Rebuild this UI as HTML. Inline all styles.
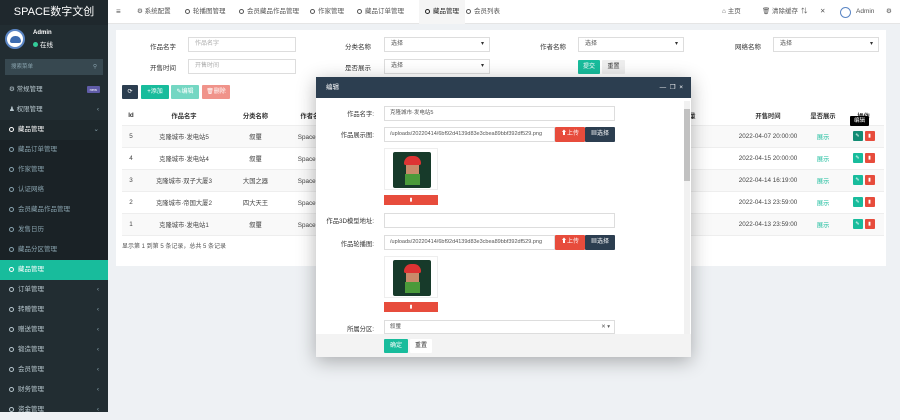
<!DOCTYPE html>
<html><head><meta charset="utf-8"><style>
*{margin:0;padding:0;box-sizing:border-box}
body{width:900px;height:412px;overflow:hidden;background:#eef1f4;font-family:"Liberation Sans","Noto Sans CJK SC",sans-serif;font-size:7px;color:#333;position:relative}
.a{position:absolute}
#side{left:0;top:0;width:108px;height:412px;background:#222d32}
#logo{left:0;top:0;width:108px;height:25px;background:#1f282d;color:#fff;font-size:11px;text-align:center;line-height:25px}
.si{position:absolute;left:0;width:108px;height:20px;line-height:20px;padding-left:9px;color:#b8c7ce;font-size:6.5px}
.si.sub{background:#1a2226;color:#8aa4af}
.si .c{display:inline-block;width:5px;height:5px;border:1.3px solid #b8c7ce;border-radius:50%;margin-right:4px;vertical-align:-0.5px}
.si .ar{position:absolute;right:9px;color:#8aa4af}
#top{left:108px;top:0;width:792px;height:24px;background:#fff;border-bottom:1px solid #e5e5e5}
.tn{position:absolute;top:0;line-height:24px;font-size:6.5px;color:#555}
.tn .c{display:inline-block;width:5px;height:5px;border:1.2px solid #555;border-radius:50%;margin-right:3px;vertical-align:-.5px}
#card{left:116px;top:30px;width:770px;height:236px;background:#fff}
.lb{position:absolute;font-size:6.5px;color:#333}
.in{position:absolute;height:15px;border:1px solid #ddd;background:#fff;font-size:6px;color:#aaa;line-height:13px;padding-left:6px}
.sel::after{content:"▾";position:absolute;right:5px;color:#333;font-size:6px}
.sel{color:#555}
.btn{position:absolute;height:14px;line-height:14px;color:#fff;font-size:6px;text-align:center;border-radius:1px}
table{position:absolute;border-collapse:collapse;font-size:6.3px}
td,th{height:22px;text-align:center;border-bottom:1px solid #eee;color:#444;font-weight:normal}
th{height:19px;font-weight:bold;color:#333}
tr.o td{background:#f9f9f9}
#modal{left:316px;top:77px;width:375px;height:280px;background:#fff;box-shadow:0 4px 18px rgba(0,0,0,.3)}
#mh{left:0;top:0;width:375px;height:21px;background:#2c3e50;color:#fff;line-height:21px;padding-left:10px;font-size:6.5px}
.ml{position:absolute;width:58px;text-align:right;font-size:6.3px;color:#333}
.mi{position:absolute;left:68px;height:15px;border:1px solid #ddd;font-size:5.5px;color:#555;line-height:13px;padding-left:5px;background:#fff}
.pic{position:absolute;left:68px;width:54px;height:42px;border:1px solid #eee;background:#fff}
.pic div{position:absolute;left:8px;top:3px;width:38px;height:36px;background:#173a2a;border-radius:2px;overflow:hidden}
.del{position:absolute;left:68px;width:54px;height:10px;background:#e74c3c;color:#fff;font-size:5px;text-align:center;line-height:10px}
.sh{display:inline-block;color:#18bc9c}
.ob{display:inline-block;width:10px;height:10px;border-radius:1px;vertical-align:middle;margin:0 1px;color:#fff;font-size:5px;line-height:10px}
</style></head><body>
<div id="side" class="a">
<div id="logo" class="a">SPACE数字文创</div>
<div class="a" style="left:5px;top:29px;width:20px;height:20px;border-radius:50%;background:#fff;border:2px solid #5b86c5"><div style="position:absolute;left:3px;top:5px;width:11px;height:7px;border-radius:5px 5px 2px 2px;background:#3d6cb0"></div></div>
<div class="a" style="left:33px;top:30px;color:#fff;font-size:6px;font-weight:bold">Admin</div>
<div class="a" style="left:33px;top:39px;color:#fff;font-size:6.5px"><span style="display:inline-block;width:5px;height:5px;border-radius:50%;background:#3c9;margin-right:2px"></span>在线</div>
<div class="a" style="left:5px;top:59px;width:98px;height:16px;background:#374850;color:#8aa4af;font-size:5.5px;line-height:16px;padding-left:6px">搜索菜单<span style="position:absolute;right:6px">⚲</span></div>
<div class="si" style="top:80px">⚙ 常规管理<span style="position:absolute;right:8px;top:6px;background:#605ca8;color:#fff;font-size:4px;line-height:7px;padding:0 3px;border-radius:1px">new</span></div>
<div class="si" style="top:100px">♟ 权限管理<span class="ar">‹</span></div>
<div class="si" style="top:120px;color:#fff;background:#1e282c"><span class="c" style="border-color:#fff"></span>藏品管理<span class="ar">⌄</span></div>
<div class="si sub" style="top:140px"><span class="c" style="border-color:#8aa4af"></span>藏品订单管理</div>
<div class="si sub" style="top:160px"><span class="c" style="border-color:#8aa4af"></span>作家管理</div>
<div class="si sub" style="top:180px"><span class="c" style="border-color:#8aa4af"></span>认证网络</div>
<div class="si sub" style="top:200px"><span class="c" style="border-color:#8aa4af"></span>会员藏品作品管理</div>
<div class="si sub" style="top:220px"><span class="c" style="border-color:#8aa4af"></span>发售日历</div>
<div class="si sub" style="top:240px"><span class="c" style="border-color:#8aa4af"></span>藏品分区管理</div>
<div class="si" style="top:260px;background:#18bc9c;color:#fff"><span class="c" style="border-color:#fff"></span>藏品管理</div>
<div class="si" style="top:280px"><span class="c"></span>订单管理<span class="ar">‹</span></div>
<div class="si" style="top:300px"><span class="c"></span>转赠管理<span class="ar">‹</span></div>
<div class="si" style="top:320px"><span class="c"></span>赠送管理<span class="ar">‹</span></div>
<div class="si" style="top:340px"><span class="c"></span>锻造管理<span class="ar">‹</span></div>
<div class="si" style="top:360px"><span class="c"></span>会员管理<span class="ar">‹</span></div>
<div class="si" style="top:380px"><span class="c"></span>财务管理<span class="ar">‹</span></div>
<div class="si" style="top:400px"><span class="c"></span>资金管理<span class="ar">‹</span></div>
</div>
<div id="top" class="a">
<div class="tn" style="left:8px;font-size:8px">≡</div>
<div class="tn" style="left:29px">⚙ 系统配置</div>
<div class="tn" style="left:77px"><span class="c"></span>轮播图管理</div>
<div class="tn" style="left:131px"><span class="c"></span>会员藏品作品管理</div>
<div class="tn" style="left:202px"><span class="c"></span>作家管理</div>
<div class="tn" style="left:249px"><span class="c"></span>藏品订单管理</div>
<div class="tn" style="left:311px;color:#222;background:#f5f5f5;padding:0 6px"><span class="c" style="border-color:#222"></span>藏品管理</div>
<div class="tn" style="left:358px"><span class="c"></span>会员列表</div>
<div class="tn" style="left:614px">⌂ 主页</div>
<div class="tn" style="left:654px">🗑 清除缓存</div>
<div class="tn" style="left:693px">⇅</div>
<div class="tn" style="left:712px">✕</div>
<div class="a" style="left:732px;top:7px;width:11px;height:11px;border-radius:50%;background:#fff;border:1.5px solid #5b86c5"></div>
<div class="tn" style="left:748px">Admin</div>
<div class="tn" style="left:778px">⚙</div>
</div>
<div id="card" class="a">
<div class="lb" style="left:34px;top:11px">作品名字</div><div class="in" style="left:72px;top:7px;width:108px">作品名字</div>
<div class="lb" style="left:34px;top:32px">开售时间</div><div class="in" style="left:72px;top:29px;width:108px">开售时间</div>
<div class="lb" style="left:229px;top:11px">分类名称</div><div class="in sel" style="left:268px;top:7px;width:106px">选择</div>
<div class="lb" style="left:229px;top:32px">是否展示</div><div class="in sel" style="left:268px;top:29px;width:106px">选择</div>
<div class="lb" style="left:424px;top:11px">作者名称</div><div class="in sel" style="left:462px;top:7px;width:106px">选择</div>
<div class="btn" style="left:462px;top:30px;width:22px;background:#18bc9c">提交</div>
<div class="btn" style="left:486px;top:30px;width:23px;background:#eee;color:#333">重置</div>
<div class="lb" style="left:619px;top:11px">网络名称</div><div class="in sel" style="left:657px;top:7px;width:106px">选择</div>
<div class="btn" style="left:6px;top:55px;width:16px;background:#2c3e50">⟳</div>
<div class="btn" style="left:25px;top:55px;width:28px;background:#18bc9c">+添加</div>
<div class="btn" style="left:55px;top:55px;width:28px;background:#74d7c3">✎编辑</div>
<div class="btn" style="left:86px;top:55px;width:28px;background:#f0938a">🗑删除</div>
<table style="left:6px;top:76px;width:762px">
<tr><th style="width:18px">Id</th><th style="width:88px">作品名字</th><th style="width:55px">分类名称</th><th style="width:60px">作者名称</th><th style="width:340px"></th><th style="width:50px;text-align:left">数量</th><th style="width:70px">开售时间</th><th style="width:40px">是否展示</th><th>操作</th></tr>
<tr class="o"><td>5</td><td>克隆城市·发电站5</td><td>叙璽</td><td>Space数字</td><td></td><td style="text-align:left">82</td><td>2022-04-07 20:00:00</td><td><span class="sh">展示</span></td><td><span class="ob" style="background:#128c74">✎</span><span class="ob" style="background:#e74c3c">▮</span></td></tr>
<tr><td>4</td><td>克隆城市·发电站4</td><td>叙璽</td><td>Space数字</td><td></td><td style="text-align:left">90</td><td>2022-04-15 20:00:00</td><td><span class="sh">展示</span></td><td><span class="ob" style="background:#18bc9c">✎</span><span class="ob" style="background:#e74c3c">▮</span></td></tr>
<tr class="o"><td>3</td><td>克隆城市·双子大厦3</td><td>大国之器</td><td>Space数字</td><td></td><td style="text-align:left">08</td><td>2022-04-14 16:19:00</td><td><span class="sh">展示</span></td><td><span class="ob" style="background:#18bc9c">✎</span><span class="ob" style="background:#e74c3c">▮</span></td></tr>
<tr><td>2</td><td>克隆城市·帝国大厦2</td><td>四大天王</td><td>Space数字</td><td></td><td style="text-align:left">11</td><td>2022-04-13 23:59:00</td><td><span class="sh">展示</span></td><td><span class="ob" style="background:#18bc9c">✎</span><span class="ob" style="background:#e74c3c">▮</span></td></tr>
<tr class="o"><td>1</td><td>克隆城市·发电站1</td><td>叙璽</td><td>Space数字</td><td></td><td style="text-align:left">35</td><td>2022-04-13 23:59:00</td><td><span class="sh">展示</span></td><td><span class="ob" style="background:#18bc9c">✎</span><span class="ob" style="background:#e74c3c">▮</span></td></tr>
</table>
<div class="lb" style="left:6px;top:211px;font-size:6px;color:#555">显示第 1 到第 5 条记录，总共 5 条记录</div>
</div>
<div class="a" style="left:850px;top:116px;width:19px;height:10px;background:#000;color:#fff;font-size:5.5px;text-align:center;line-height:10px;border-radius:1px">编辑</div>
<div id="modal" class="a">
<div id="mh" class="a">编辑<span style="position:absolute;right:8px">—&nbsp; ❐ &nbsp;×</span></div>
<div class="a" style="left:368px;top:24px;width:6px;height:234px;background:#f1f1f1"><div style="position:absolute;left:0;top:8px;width:6px;height:72px;background:#c1c1c1"></div></div>
<div class="ml" style="top:32px">作品名字:</div><div class="mi" style="top:29px;width:231px">克隆城市·发电站5</div>
<div class="ml" style="top:53px">作品展示图:</div><div class="mi" style="top:50px;width:171px">/uploads/20220414/6bf92d4139d83e3cbea89bbf392df529.png</div>
<div class="btn" style="left:239px;top:50px;width:30px;height:15px;background:#e74c3c">⬆上传</div>
<div class="btn" style="left:269px;top:50px;width:30px;height:15px;background:#2c3e50">▦选择</div>
<div class="pic" style="top:71px"><div><span style="position:absolute;left:11px;top:4px;width:17px;height:9px;background:#d33;border-radius:8px 8px 2px 2px"></span><span style="position:absolute;left:13px;top:13px;width:13px;height:9px;background:#c98a6a"></span><span style="position:absolute;left:12px;top:22px;width:15px;height:11px;background:#4a9a3a"></span></div></div>
<div class="del" style="top:118px">▮</div>
<div class="ml" style="top:139px;left:-6px;width:64px">作品3D模型地址:</div><div class="mi" style="top:136px;width:231px"></div>
<div class="ml" style="top:162px">作品轮播图:</div><div class="mi" style="top:158px;width:171px">/uploads/20220414/6bf92d4139d83e3cbea89bbf392df529.png</div>
<div class="btn" style="left:239px;top:158px;width:30px;height:15px;background:#e74c3c">⬆上传</div>
<div class="btn" style="left:269px;top:158px;width:30px;height:15px;background:#2c3e50">▦选择</div>
<div class="pic" style="top:179px"><div><span style="position:absolute;left:11px;top:4px;width:17px;height:9px;background:#d33;border-radius:8px 8px 2px 2px"></span><span style="position:absolute;left:13px;top:13px;width:13px;height:9px;background:#c98a6a"></span><span style="position:absolute;left:12px;top:22px;width:15px;height:11px;background:#4a9a3a"></span></div></div>
<div class="del" style="top:225px">▮</div>
<div class="ml" style="top:247px">所属分区:</div><div class="mi" style="top:243px;width:231px;height:14px;overflow:hidden">叙璽<span style="position:absolute;right:4px">✕ ▾</span></div>
<div class="a" style="left:0;top:257px;width:375px;height:23px;background:#f3f3f3"></div>
<div class="btn" style="left:68px;top:262px;width:24px;height:14px;background:#18bc9c">确定</div>
<div class="btn" style="left:94px;top:262px;width:22px;height:14px;background:#fff;color:#333">重置</div>
</div>
</body></html>
